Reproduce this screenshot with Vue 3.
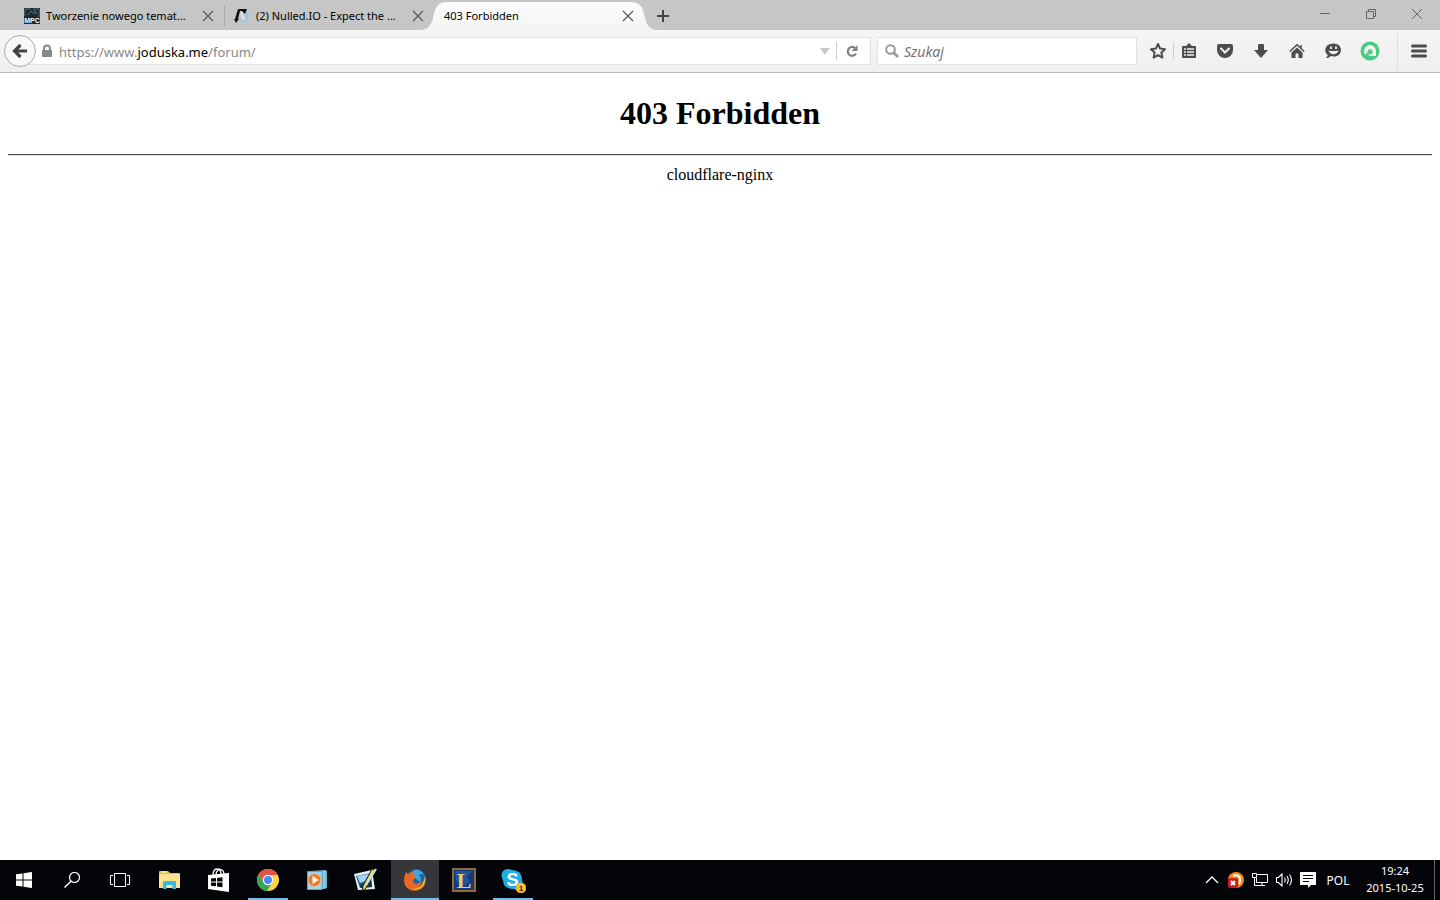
<script setup>
import { ref } from 'vue'

const tabs = [
  { icon: 'mpc', title: 'Tworzenie nowego temat...' },
  { icon: 'nulled', title: '(2) Nulled.IO - Expect the ...' },
  { icon: '', title: '403 Forbidden' },
]
const active = ref(2)
const query = ref('')
</script>

<template>
  <div class="screen">
    <header class="titlebar">
      <div class="tabs">
        <div v-for="(t, i) in tabs" :key="t.title" class="tab" :class="{ sel: i === active }">
          <svg v-if="i === active" class="shape" width="238" height="28" viewBox="0 0 238 28">
            <defs>
              <linearGradient id="tab-g" x1="0" y1="0" x2="0" y2="1">
                <stop offset="0" stop-color="#fcfcfc" />
                <stop offset="1" stop-color="#f5f5f5" />
              </linearGradient>
            </defs>
            <path d="M0 28C8 28 11 24 13 16C15 6 17 0 28 0H210C221 0 223 6 225 16C227 24 230 28 238 28Z" fill="url(#tab-g)" />
          </svg>
          <svg v-if="t.icon === 'mpc'" class="fav" viewBox="0 0 16 16">
            <rect width="16" height="16" fill="#1d2930" />
            <path d="M1 8V1H7M9 1H15V9M4 7L7 3L10 6L12 3M10 2L13 6" fill="none" stroke="#4e7381" />
            <text x="8" y="15" class="mpc">MPC</text>
          </svg>
          <svg v-if="t.icon === 'nulled'" class="fav" viewBox="0 0 16 16">
            <path d="M6 13H12L14 2" fill="none" stroke="#9cc8e4" stroke-width="2.500" />
            <path d="M7 4L10 12" stroke="#e4e4e4" stroke-width="2" />
            <path d="M4 1H13L11 6L8 3H6L4 11H5L2 15L0 11H1Z" fill="#111" />
          </svg>
          <button class="title" @click="active = i">{{ t.title }}</button>
          <button class="close" aria-label="Zamknij kartę">
            <svg width="12" height="12" viewBox="0 0 12 12"><path d="M1 1L11 11M11 1L1 11" fill="none" stroke="#555" stroke-width="1.200" /></svg>
          </button>
        </div>
        <button class="plus" aria-label="Nowa karta">
          <svg width="12" height="12" viewBox="0 0 12 12"><path d="M6 0V12M0 6H12" stroke="#444" stroke-width="2" /></svg>
        </button>
      </div>
      <div class="win">
        <button aria-label="Minimalizuj"><svg width="12" height="12" viewBox="0 0 12 12"><path d="M1 5.500H11" /></svg></button>
        <button aria-label="Przywróć"><svg width="12" height="12" viewBox="0 0 12 12"><path d="M1.500 3.500H8.500V10.500H1.500ZM3.500 3.500V1.500H10.500V8.500H8.500" /></svg></button>
        <button aria-label="Zamknij"><svg width="12" height="12" viewBox="0 0 12 12"><path d="M1 1L11 11M11 1L1 11" /></svg></button>
      </div>
    </header>

    <nav class="navbar">
      <button class="back" aria-label="Wstecz">
        <svg width="16" height="16" viewBox="0 0 16 16"><path d="M8.500 2L2.500 8L8.500 14M3 8H15" fill="none" stroke="#444" stroke-width="3.200" /></svg>
      </button>
      <div class="urlbar">
        <svg width="10" height="14" viewBox="0 0 10 14">
          <path d="M2 7V4.500A3 3 0 0 1 8 4.500V7" fill="none" stroke="#888" stroke-width="2" />
          <rect y="6" width="10" height="7" rx="1" fill="#888" />
        </svg>
        <div class="url" role="textbox" aria-label="Adres" contenteditable="true" spellcheck="false">https://www.<b>joduska.me</b>/forum/</div>
        <button class="drop" aria-label="Historia adresów">
          <svg width="10" height="8" viewBox="0 0 10 8"><path d="M0 1H10L5 8Z" fill="#c8c8c8" /></svg>
        </button>
        <button class="reload" aria-label="Odśwież">
          <svg width="14" height="14" viewBox="0 0 14 14">
            <path d="M9.800 3.800A4.400 4.400 0 1 0 11 9.500" fill="none" stroke="#808080" stroke-width="2.200" />
            <path d="M12.500 1V7H6.500Z" fill="#808080" />
          </svg>
        </button>
      </div>
      <label class="search">
        <svg width="14" height="14" viewBox="0 0 14 14">
          <circle cx="5.500" cy="5.500" r="4.300" fill="none" stroke="#999" stroke-width="2" />
          <path d="M8.500 8.500L13 13" stroke="#999" stroke-width="2.800" />
        </svg>
        <input v-model="query" type="text" placeholder="Szukaj" aria-label="Szukaj" />
      </label>
      <div class="tools">
        <button class="star" aria-label="Dodaj zakładkę">
          <svg width="18" height="18" viewBox="0 0 18 18"><path d="M9 2L11.100 6.600L16 7.200L12.400 10.600L13.400 15.600L9 13.100L4.600 15.600L5.600 10.600L2 7.200L6.900 6.600Z" fill="none" stroke="#4d4d4d" stroke-width="2" stroke-linejoin="round" /></svg>
        </button>
        <button class="list" aria-label="Zakładki">
          <svg width="16" height="16" viewBox="0 0 16 16">
            <path d="M2 3H5L8 0L11 3H14A1 1 0 0 1 15 4V14A1 1 0 0 1 14 15H2A1 1 0 0 1 1 14V4A1 1 0 0 1 2 3Z" fill="#4d4d4d" />
            <path d="M3 6H5M6 6H13M3 9H5M6 9H13M3 12H5M6 12H13" stroke="#f2f2f2" stroke-width="1.600" />
          </svg>
        </button>
        <button aria-label="Pocket">
          <svg width="16" height="16" viewBox="0 0 16 16">
            <path d="M2 1H14A2 2 0 0 1 16 3V7A8 8 0 0 1 0 7V3A2 2 0 0 1 2 1Z" fill="#4d4d4d" />
            <path d="M4 5.500L8 9.500L12 5.500" fill="none" stroke="#f2f2f2" stroke-width="2" stroke-linecap="round" />
          </svg>
        </button>
        <button aria-label="Pobrane">
          <svg width="16" height="16" viewBox="0 0 16 16"><path d="M6 1H10Q11 1 11 2V7H15L8 15L1 7H5V2Q5 1 6 1Z" fill="#4d4d4d" /></svg>
        </button>
        <button aria-label="Strona startowa">
          <svg width="16" height="16" viewBox="0 0 16 16">
            <path d="M8 4.500L13.500 9.500V15H9.500V10.500H6.500V15H2.500V9.500Z" fill="#4d4d4d" />
            <path d="M0.800 8.500L8 1.700L15.200 8.500M12 2V5" fill="none" stroke="#4d4d4d" stroke-width="1.500" />
          </svg>
        </button>
        <button aria-label="Rozmowa">
          <svg width="16" height="16" viewBox="0 0 16 16">
            <path d="M8.500 0.500C13 0.500 16 3.300 16 7C16 10.800 13 13.500 9 13.500C7.500 13.500 6.500 13.300 5.700 13C4.500 14.500 3 15.300 1 15C2 14 2.600 13 2.600 11.700C1 10.500 0.300 9 0.300 7C0.300 3.300 4 0.500 8.500 0.500Z" fill="#4d4d4d" />
            <path d="M6 3.500V6M11 3.500V6" stroke="#f2f2f2" stroke-width="1.800" />
            <path d="M3.500 7.500Q8.500 8.500 13.500 7.500Q12 11.300 8.500 11.300Q5 11.300 3.500 7.500Z" fill="#f2f2f2" />
          </svg>
        </button>
        <button class="avast" aria-label="Avast">
          <svg width="20" height="20" viewBox="0 0 20 20">
            <circle cx="10" cy="10" r="9.500" fill="#4acb83" />
            <path d="M5.500 14A6 6 0 1 1 16 9.500V15H10Q7 15 6.500 12Z" fill="#f4f4f4" />
            <circle cx="10" cy="10.800" r="2.600" fill="#4acb83" />
            <path d="M4 15L8 11.500L9.500 16Z" fill="#4acb83" />
          </svg>
        </button>
        <button class="menu" aria-label="Menu">
          <svg width="16" height="14" viewBox="0 0 16 14"><path d="M1.500 2H14.500M1.500 7H14.500M1.500 12H14.500" stroke="#4d4d4d" stroke-width="3" stroke-linecap="round" /></svg>
        </button>
      </div>
    </nav>

    <main class="page">
      <h1>403 Forbidden</h1>
      <hr />
      <p>cloudflare-nginx</p>
    </main>

    <footer class="taskbar">
      <div class="system">
        <button aria-label="Start">
          <svg width="16" height="16" viewBox="0 0 16 16"><path d="M0 2.300L6.500 1.400V7.500H0ZM7.500 1.200L16 0V7.500H7.500ZM0 8.500H6.500V14.600L0 13.700ZM7.500 8.500H16V16L7.500 14.800Z" fill="#fff" /></svg>
        </button>
        <button aria-label="Wyszukaj">
          <svg width="16" height="16" viewBox="0 0 16 16"><circle cx="10.500" cy="5.500" r="5" fill="none" stroke="#fff" stroke-width="1.200" /><path d="M7 9.200L0.500 15.500" stroke="#fff" stroke-width="1.500" /></svg>
        </button>
        <button aria-label="Widok zadań">
          <svg width="20" height="14" viewBox="0 0 20 14"><path d="M4.500 0.500H15.500V13.500H4.500ZM3 2.500H0.500V11.500H3M17 2.500H19.500V11.500H17" fill="none" stroke="#fff" /></svg>
        </button>
      </div>
      <div class="apps">
        <button aria-label="Eksplorator plików">
          <svg width="24" height="24" viewBox="0 0 24 24">
            <path d="M1 4Q1 3 2 3H10L12 5H21Q22 5 22 6V20H1Z" fill="#e9bd49" />
            <path d="M1 7L2 6H22V20H1Z" fill="#ffe290" />
            <path d="M3 4H8" stroke="#fff" />
            <path d="M5 21V14Q5 13 6 13H17Q18 13 18 14V21H14.500V17H8.500V21Z" fill="#35b9e5" />
          </svg>
        </button>
        <button aria-label="Sklep">
          <svg width="24" height="26" viewBox="0 0 24 26">
            <path d="M6 8C6 3 8 2 10 2C13 2 14 4 14 7M9 8C9 4 12 1 15 3Q17 4 17 7" fill="none" stroke="#fff" stroke-width="1.300" />
            <path d="M1 8L22 6V25L1 22Z" fill="#fff" />
            <path d="M4 11.500L9 11V14.600H4ZM10 10.900L15.500 10.200V14.600H10ZM4 15.600H9V19.300L4 18.800ZM10 15.600H15.500V20.200L10 19.500Z" fill="#05070a" />
          </svg>
        </button>
        <button class="run" aria-label="Chrome">
          <svg width="22" height="22" viewBox="0 0 22 22">
            <circle cx="11" cy="11" r="11" fill="#fdd446" />
            <path d="M1.500 5.500A11 11 0 0 1 20.500 5.500L21 6H11A5 5 0 0 0 6.500 13.500Z" fill="#e25141" />
            <path d="M1.500 5.500A11 11 0 0 0 10 22L15 14A5 5 0 0 1 6.500 13.500Z" fill="#35a458" />
            <circle cx="11" cy="11" r="5.200" fill="#fff" />
            <circle cx="11" cy="11" r="4" fill="#4a8af0" />
          </svg>
        </button>
        <button aria-label="Odtwarzacz multimediów">
          <svg width="20" height="22" viewBox="0 0 20 22">
            <path d="M4 2L18 1L20 2V19L17 20H3Z" fill="#6fb8d8" />
            <path d="M0.500 2.500H15V20.500H0.500Z" fill="#a2d5ed" stroke="#5ba5c8" />
            <path d="M17 2V20" stroke="#a9d9ec" />
            <circle cx="7.500" cy="11" r="6.300" fill="#f07925" stroke="#e6b38d" />
            <path d="M5.500 7V15L11.500 11Z" fill="#fff" />
          </svg>
        </button>
        <button aria-label="Edytor obrazów">
          <svg width="24" height="24" viewBox="0 0 24 24">
            <path d="M0 6L18 2L21 21L4 22Z" fill="#e9f3f3" />
            <path d="M2 8L17 5L18 19L6 20Z" fill="#1b58a8" />
            <path d="M3 8L15 6L11 13L6 15Z" fill="#a5d2ee" />
            <path d="M6 17L17 13L18 19L7 20Z" fill="#18372c" />
            <path d="M18 1L21 2L12 20L8 23L9 18Z" fill="#e5dc45" stroke="#1c2625" />
            <path d="M22 1L12 17" stroke="#d4e0e8" stroke-width="2" />
          </svg>
        </button>
        <button class="run current" aria-label="Firefox">
          <svg width="24" height="24" viewBox="0 0 24 24">
            <circle cx="13" cy="11" r="10" fill="#1766ac" />
            <path d="M11 2Q18 1 21 7Q18 5 16 7Q19 10 17 14L12 10L8 7Z" fill="#42a5dc" />
            <path d="M3 4Q4 6 6 6Q8 3 11 4Q9 6 10 8Q13 8 13 10L10 12Q10 16 14 16Q17 15 18 13Q19 17 15 19Q20 19 22 10Q24 17 18 21Q13 24 7 22Q1 19 1 12Q1 8 3 4Z" fill="#e76b25" />
            <path d="M22 7Q24 15 18 20Q14 23 9 21Q18 21 20 14Q22 11 22 7Z" fill="#f6b333" />
          </svg>
        </button>
        <button aria-label="League of Legends">
          <svg width="24" height="24" viewBox="0 0 24 24">
            <rect x="1" y="1" width="22" height="22" fill="#173977" stroke="#8f683c" stroke-width="2" />
            <path d="M3 3H20L15 9L18 13L12 19L4 13Z" fill="#1e579c" />
            <text x="12" y="20" class="lol">L</text>
          </svg>
        </button>
        <button class="run" aria-label="Skype">
          <svg width="26" height="26" viewBox="0 0 26 26">
            <path d="M8 2Q10 2 12 3Q22 3 22 13Q24 19 20 22Q17 24 14 22Q3 22 3 13Q0 8 3 4Q5 2 8 2Z" fill="#20aee9" />
            <text x="12.500" y="19" class="skype">S</text>
            <circle cx="21" cy="21" r="5" fill="#ffc233" stroke="#f3a018" />
            <text x="21" y="24" class="count">1</text>
          </svg>
        </button>
      </div>
      <div class="tray">
        <button aria-label="Ukryte ikony"><svg width="14" height="8" viewBox="0 0 14 8"><path d="M1 7L7 1L13 7" fill="none" stroke="#fff" stroke-width="1.300" /></svg></button>
        <button aria-label="Avast">
          <svg width="16" height="16" viewBox="0 0 16 16">
            <circle cx="8" cy="8" r="8" fill="#f68b13" />
            <path d="M5 4Q10 2 12 6Q13 9 11 12" fill="none" stroke="#fff" stroke-width="2" />
            <rect y="6" width="10" height="10" rx="2" fill="#ca1c20" />
            <path d="M3 9L7 13M7 9L3 13" stroke="#fff" stroke-width="2" />
          </svg>
        </button>
        <button aria-label="Sieć">
          <svg width="16" height="14" viewBox="0 0 16 14"><path d="M5 1.500H15.500V9.500H4.500V5M0.500 0.500H4.500V4.500H0.500ZM2.500 4.500V12.500H8M10 9.500V12.500M6 12.500H13" fill="none" stroke="#fff" /></svg>
        </button>
        <button aria-label="Głośność">
          <svg width="17" height="14" viewBox="0 0 17 14"><path d="M0.500 4.500H2.500L6 1V13L2.500 9.500H0.500ZM8.500 4.500Q10 7 8.500 9.500M11 3Q13.500 7 11 11M13.500 1.500Q17.500 7 13.500 12.500" fill="none" stroke="#fff" stroke-width="1.100" /></svg>
        </button>
        <button aria-label="Powiadomienia">
          <svg width="16" height="16" viewBox="0 0 16 16"><path d="M0 0H16V13H11L8 16V13H0Z" fill="#fff" /><path d="M3 3.500H13M3 6.500H13M3 9.500H9" stroke="#05070a" /></svg>
        </button>
        <button class="lang">POL</button>
        <button class="clock"><span>19:24</span><span>2015-10-25</span></button>
        <button class="desk" aria-label="Pokaż pulpit"></button>
      </div>
    </footer>
  </div>
</template>

<style>
body {
  margin: 0;
}
</style>

<style scoped>
.screen {
  min-height: 100vh;
  display: flex;
  flex-direction: column;
  background: #fff;
  font-family: 'Noto Sans', 'Open Sans', sans-serif;
  font-size: 11px;
  color: #000;
}
button {
  display: flex;
  align-items: center;
  justify-content: center;
  flex: none;
  border: 0;
  padding: 0;
  background: none;
  color: inherit;
  font: inherit;
}
svg {
  flex: none;
}
.titlebar {
  display: flex;
  justify-content: space-between;
  height: 30px;
  background: #c6c6c6;
}
.tabs {
  display: flex;
  padding-left: 14px;
}
.tab {
  position: relative;
  box-sizing: border-box;
  display: flex;
  align-items: center;
  gap: 6px;
  width: 210px;
  height: 30px;
  padding: 2px 10px 0;
}
.tab:first-child::after {
  content: '';
  position: absolute;
  right: -1px;
  top: 6px;
  height: 20px;
  border-right: 1px solid #a6a6a6;
}
.shape {
  position: absolute;
  left: -14px;
  bottom: 0;
}
.fav {
  width: 16px;
  height: 16px;
}
.mpc {
  font: bold 7px 'Liberation Sans', sans-serif;
  fill: #fff;
  text-anchor: middle;
}
.title {
  position: relative;
  flex: 1;
  justify-content: flex-start;
  white-space: nowrap;
  line-height: 16px;
  min-width: 0;
}
.close {
  position: relative;
}
.plus {
  width: 38px;
  height: 32px;
}
.win {
  display: flex;
}
.win button {
  width: 46px;
  height: 28px;
}
.win path {
  fill: none;
  stroke: #666;
}
.navbar {
  display: flex;
  align-items: center;
  height: 42px;
  padding-left: 4px;
  border-bottom: 1px solid #b9b9b9;
  background: linear-gradient(#f5f5f5, #efefef);
}
.back {
  position: relative;
  box-sizing: border-box;
  width: 32px;
  height: 32px;
  border: 1px solid #aaa;
  border-radius: 50%;
  background: #f8f8f8;
}
.urlbar,
.search {
  box-sizing: border-box;
  display: flex;
  align-items: center;
  height: 28px;
  border: 1px solid #e2e2e2;
  background: #fff;
}
.urlbar {
  flex: 1;
  min-width: 0;
  margin-left: -8px;
  padding-left: 13px;
}
.url {
  flex: 1;
  min-width: 0;
  padding: 2px 0 0 7px;
  outline: none;
  white-space: nowrap;
  overflow: hidden;
  font-size: 13px;
  line-height: 20px;
  color: #888;
}
.url b {
  font-weight: normal;
  color: #000;
}
.drop {
  width: 22px;
  height: 20px;
}
.reload {
  width: 34px;
  height: 18px;
  border-left: 1px solid #ccc;
  padding-right: 3px;
}
.search {
  width: 260px;
  margin-left: 6px;
  padding: 0 7px;
  gap: 5px;
}
.search input {
  flex: 1;
  min-width: 0;
  border: 0;
  padding: 2px 0 0;
  outline: none;
  background: none;
  font: 14px/20px 'Noto Sans', sans-serif;
}
.search input::placeholder {
  font-style: italic;
  color: #757575;
}
.tools {
  display: flex;
  align-items: center;
  height: 42px;
  margin-left: 5px;
}
.tools button {
  width: 36px;
  height: 16px;
}
.tools .star {
  width: 32px;
  border-right: 1px solid #ccc;
}
.tools .list {
  width: 30px;
  margin-right: 3px;
}
.tools .avast {
  width: 38px;
}
.tools .menu {
  width: 43px;
  height: 36px;
  margin-left: 8px;
  border-left: 1px solid #dcdcdc;
}
.page {
  flex: 1;
  padding: 22px 8px 8px;
  font-family: 'Liberation Serif', serif;
  text-align: center;
}
h1 {
  margin: 0 0 22px;
  font-size: 32px;
  line-height: 37px;
}
hr {
  margin: 0 0 8px;
  border: 0;
  border-top: 1px solid #4a4a4a;
  border-bottom: 1px solid #ddd;
}
p {
  margin: 0;
  font-size: 16px;
  line-height: 21px;
}
.taskbar {
  display: flex;
  height: 40px;
  background: #030508;
  color: #fff;
}
.taskbar button {
  height: 40px;
}
.system,
.apps,
.tray {
  display: flex;
}
.system button,
.apps button {
  width: 48px;
}
.apps {
  gap: 1px;
  margin-left: 2px;
}
.apps .run {
  position: relative;
}
.apps .run::after {
  content: '';
  position: absolute;
  left: 4px;
  right: 4px;
  bottom: 0;
  height: 2px;
  background: #76b9ed;
}
.apps .current {
  background: #35373a;
}
.apps .current::after {
  left: 0;
  right: 0;
}
.lol {
  font: bold 22px 'Liberation Serif', serif;
  fill: #eccb6b;
  text-anchor: middle;
}
.skype {
  font: bold 18px 'Liberation Sans', sans-serif;
  fill: #fff;
  text-anchor: middle;
}
.count {
  font: bold 8px 'Liberation Sans', sans-serif;
  fill: #222;
  text-anchor: middle;
}
.tray {
  margin-left: auto;
}
.tray button {
  width: 24px;
}
.tray .lang {
  width: 36px;
  font-size: 12px;
}
.tray .clock {
  flex-direction: column;
  width: 78px;
  padding-bottom: 2px;
  line-height: 17px;
}
.tray .desk {
  box-sizing: border-box;
  width: 6px;
  border-left: 1px solid #666;
}
</style>
